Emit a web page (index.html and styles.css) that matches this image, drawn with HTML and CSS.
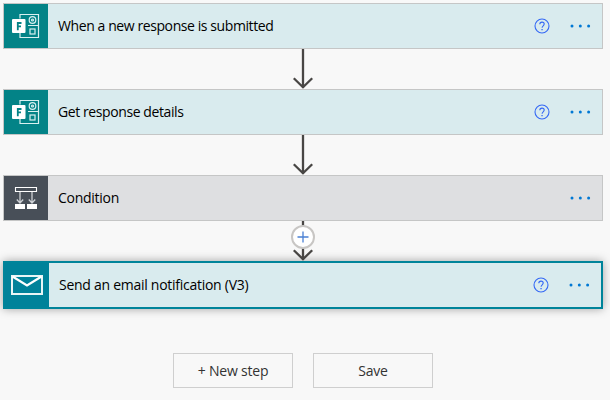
FILE: index.html
```html
<!DOCTYPE html>
<html lang="en">
<head>
<meta charset="utf-8">
<title>Flow designer</title>
<link rel="stylesheet" href="styles.css">
</head>
<body>
<svg class="defs" width="0" height="0" aria-hidden="true">
  <symbol id="forms" viewBox="0 0 28 26">
    <g fill="none" stroke="#d9f0f0" stroke-width="1.2">
      <path d="M8 5.5V1.5h18.5v23H8V20M16 12.5h10.5"/>
      <circle cx="20.5" cy="7" r="3.3"/>
      <circle cx="20.5" cy="7" r="1"/>
      <rect x="18" y="16" width="5" height="5"/>
    </g>
    <rect x="0" y="6" width="13.5" height="14" rx="1" fill="#fff"/>
    <path d="M9.5 10H5.8v7.2M5.8 13.4h3.2" fill="none" stroke="#038387" stroke-width="1.8"/>
  </symbol>
  <symbol id="arrow" viewBox="0 0 24 40">
    <path d="M12 0v39M2.8 29.2l9.2 9 9.2-9" fill="none" stroke="#484644" stroke-width="2.3"/>
  </symbol>
  <symbol id="help" viewBox="0 0 16 16">
    <circle cx="8" cy="8" r="7" fill="none" stroke="#3468f5" stroke-width="1.1"/>
    <path d="M5.8 6.2c0-1.3.9-2.1 2.2-2.1s2.2.8 2.2 2c0 1.7-2.1 1.8-2.1 3.7" fill="none" stroke="#3468f5" stroke-width="1.1"/>
    <path d="M7.4 11h1.3v1.3H7.4z" fill="#3468f5"/>
  </symbol>
  <symbol id="more" viewBox="0 0 22 4">
    <g fill="#0078d4"><circle cx="2" cy="2" r="1.5"/><circle cx="10.3" cy="2" r="1.5"/><circle cx="18.6" cy="2" r="1.5"/></g>
  </symbol>
</svg>
<main class="flow">
  <section class="card">
    <div class="icon teal"><svg class="forms"><use href="#forms"/></svg></div>
    <div class="title">When a new response is submitted</div>
    <svg class="help"><use href="#help"/></svg><svg class="more"><use href="#more"/></svg>
  </section>
  <div class="link"><svg class="arrow"><use href="#arrow"/></svg></div>
  <section class="card">
    <div class="icon teal"><svg class="forms"><use href="#forms"/></svg></div>
    <div class="title">Get response details</div>
    <svg class="help"><use href="#help"/></svg><svg class="more"><use href="#more"/></svg>
  </section>
  <div class="link"><svg class="arrow"><use href="#arrow"/></svg></div>
  <section class="card condition">
    <div class="icon slate">
      <svg width="24" height="24" viewBox="0 0 24 24">
        <path d="M1.5 1.5h21v4h-21z" fill="none" stroke="#fff" stroke-width="1.1"/>
        <path d="M6 6v11M18 6v11M2.8 13.5L6 17l3.2-3.5M14.8 13.5l3.2 3.5 3.2-3.5" fill="none" stroke="#ced1d5" stroke-width="1.3"/>
        <path d="M1 18h10v5H1zM13 18h10v5H13z" fill="#fff"/>
      </svg>
    </div>
    <div class="title">Condition</div>
    <svg class="more"><use href="#more"/></svg>
  </section>
  <div class="link"><svg class="arrow"><use href="#arrow"/></svg>
    <svg class="plus" viewBox="0 0 24 24"><circle cx="12" cy="12" r="11" fill="#fff" stroke="#c8c6c4" stroke-width="2"/><path d="M6.5 12h11M12 6.5v11" stroke="#4a80d4" stroke-width="1.3"/></svg>
  </div>
  <section class="card selected">
    <div class="icon blue">
      <svg width="32" height="20" viewBox="0 0 32 20">
        <path d="M1 1h30v18H1z" fill="none" stroke="#e9f5f6" stroke-width="2"/>
        <path d="M1.5 1.5L16 10.5l14.5-9" fill="none" stroke="#fff" stroke-width="2.2"/>
      </svg>
    </div>
    <div class="title">Send an email notification (V3)</div>
    <svg class="help"><use href="#help"/></svg><svg class="more"><use href="#more"/></svg>
  </section>
  <div class="actions">
    <button>+ New step</button>
    <button>Save</button>
  </div>
</main>
</body>
</html>
```
FILE: styles.css
```css
* { box-sizing: border-box; }
body {
  margin: 0;
  background: #f8f8f8;
  color: #000;
  font: 14px/20px "Open Sans", "Noto Sans", sans-serif;
  overflow: hidden;
}
svg { display: block; flex: none; }
.defs { position: absolute; }
.flow { width: 600px; margin: 3px 0 0 3px; }
.card {
  display: flex;
  align-items: center;
  height: 46px;
  padding-right: 10px;
  border: 1px solid #c5c6c6;
  background: #d9ebee;
}
.icon {
  display: flex;
  align-items: center;
  justify-content: center;
  align-self: stretch;
  width: 44px;
}
.teal { background: #038387; }
.slate { background: #484f58; }
.blue { background: #00829a; }
.forms { width: 28px; height: 26px; }
.title {
  flex: 1;
  margin-left: 10px;
  letter-spacing: -.41px;
  white-space: nowrap;
}
.help { width: 16px; height: 16px; margin-right: 20px; }
.more { width: 22px; height: 4px; }
.condition { background: #dedfe1; }
.condition .title { letter-spacing: -.27px; }
.selected {
  height: 48px;
  border: 2px solid #00849a;
  box-shadow: 0 0 9px rgba(0, 0, 0, .35);
}
.selected .title { letter-spacing: -.27px; }
.link { position: relative; display: flex; justify-content: center; height: 40px; }
.arrow { width: 24px; height: 40px; }
.plus { position: absolute; left: 288px; top: 4px; width: 24px; height: 24px; }
.actions { display: flex; justify-content: center; gap: 20px; margin-top: 44px; }
button {
  width: 120px;
  height: 35px;
  padding: 0;
  border: 1px solid #cfcfcf;
  background: #f8f8f8;
  color: #333;
  font: inherit;
  letter-spacing: -.2px;
}
```
